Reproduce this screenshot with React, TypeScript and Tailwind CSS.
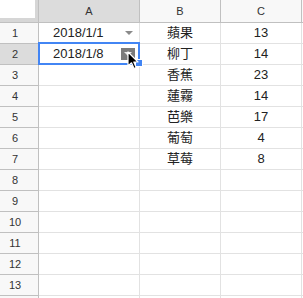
import React from "react";

const rows: { a?: string; b?: string; c?: string }[] = [
  { a: "2018/1/1", b: "蘋果", c: "13" },
  { a: "2018/1/8", b: "柳丁", c: "14" },
  { b: "香蕉", c: "23" },
  { b: "蓮霧", c: "14" },
  { b: "芭樂", c: "17" },
  { b: "葡萄", c: "4" },
  { b: "草莓", c: "8" },
  {}, {}, {}, {}, {}, {},
];

function Arrow() {
  return (
    <svg width="8" height="4" viewBox="0 0 8 4">
      <path d="M0 0 L8 0 L4 4 Z" fill="#8a8a8a" />
    </svg>
  );
}

function DropButton() {
  return (
    <div className="w-[14px] h-[12px] bg-[#7b7b7b] flex items-center justify-center">
      <svg width="8" height="4" viewBox="0 0 8 4">
        <path d="M0 0 L8 0 L4 4 Z" fill="#e8e8e8" />
      </svg>
    </div>
  );
}

function Cursor() {
  return (
    <svg width="13" height="19" viewBox="0 0 13 19" className="absolute left-[127px] top-[51px]">
      <path d="M1 1 L1 15 L4.5 11.8 L7 17.5 L9.2 16.5 L6.8 11 L11 11 Z" fill="#000" stroke="#fff" strokeWidth="1.2" strokeLinejoin="round" />
    </svg>
  );
}

export default function App() {
  return (
    <div className="relative w-[303px] h-[298px] overflow-hidden bg-white font-['Liberation_Sans','Noto_Sans_CJK_TC',sans-serif] text-[#222]">
      {/* header row */}
      <div className="flex h-[23px]">
        <div className="w-[39px] shrink-0 bg-[#d6d6d6] border-r border-b border-[#c0c0c0]">
          <div className="w-[35px] h-[18px] bg-white" />
        </div>
        <div className="w-[101px] shrink-0 bg-[#dcdcdc] border-r border-b border-[#c0c0c0] flex items-center justify-center text-[11px] text-[#333]">A</div>
        <div className="w-[81px] shrink-0 bg-[#f8f8f8] border-r border-b border-[#c0c0c0] flex items-center justify-center text-[11px] text-[#333]">B</div>
        <div className="w-[81px] shrink-0 bg-[#f8f8f8] border-r border-b border-[#c0c0c0] flex items-center justify-center text-[11px] text-[#333]">C</div>
        <div className="flex-1 bg-[#f8f8f8] border-b border-[#c0c0c0]" />
      </div>

      {rows.map((r, i) => (
        <div key={i} className="flex h-[21px]">
          <div className={`w-[39px] shrink-0 pr-[8px] border-r border-b border-[#c0c0c0] flex items-center justify-center text-[11px] text-[#333] ${i === 1 ? "bg-[#dcdcdc]" : "bg-[#f8f8f8]"}`}>
            {i + 1}
          </div>
          <div className="w-[101px] shrink-0 border-r border-b border-[#e2e2e2] flex items-center justify-between pl-[14px] text-[13px]">
            <span>{r.a}</span>
            {i === 0 && <span className="pr-[6px] flex"><Arrow /></span>}
            {i === 1 && <span className="pr-[4px] flex"><DropButton /></span>}
          </div>
          <div className="w-[81px] shrink-0 border-r border-b border-[#e2e2e2] flex items-center justify-center text-[13px]">{r.b}</div>
          <div className="w-[81px] shrink-0 border-r border-b border-[#e2e2e2] flex items-center justify-center text-[13px]">{r.c}</div>
          <div className="flex-1 border-b border-[#e2e2e2]" />
        </div>
      ))}

      {/* row 14, only its top edge is in view */}
      <div className="flex h-[21px]">
        <div className="w-[39px] shrink-0 bg-[#f8f8f8] border-r border-[#c0c0c0]" />
        <div className="w-[101px] shrink-0 border-r border-[#e2e2e2]" />
        <div className="w-[81px] shrink-0 border-r border-[#e2e2e2]" />
        <div className="w-[81px] shrink-0 border-r border-[#e2e2e2]" />
      </div>

      {/* selection */}
      <div className="absolute left-[38px] top-[42px] w-[102px] h-[23px] border-2 border-[#4285f4]" />
      <div className="absolute left-[135px] top-[59px] w-[8px] h-[8px] bg-[#4285f4] border border-white" />
      <Cursor />
    </div>
  );
}
